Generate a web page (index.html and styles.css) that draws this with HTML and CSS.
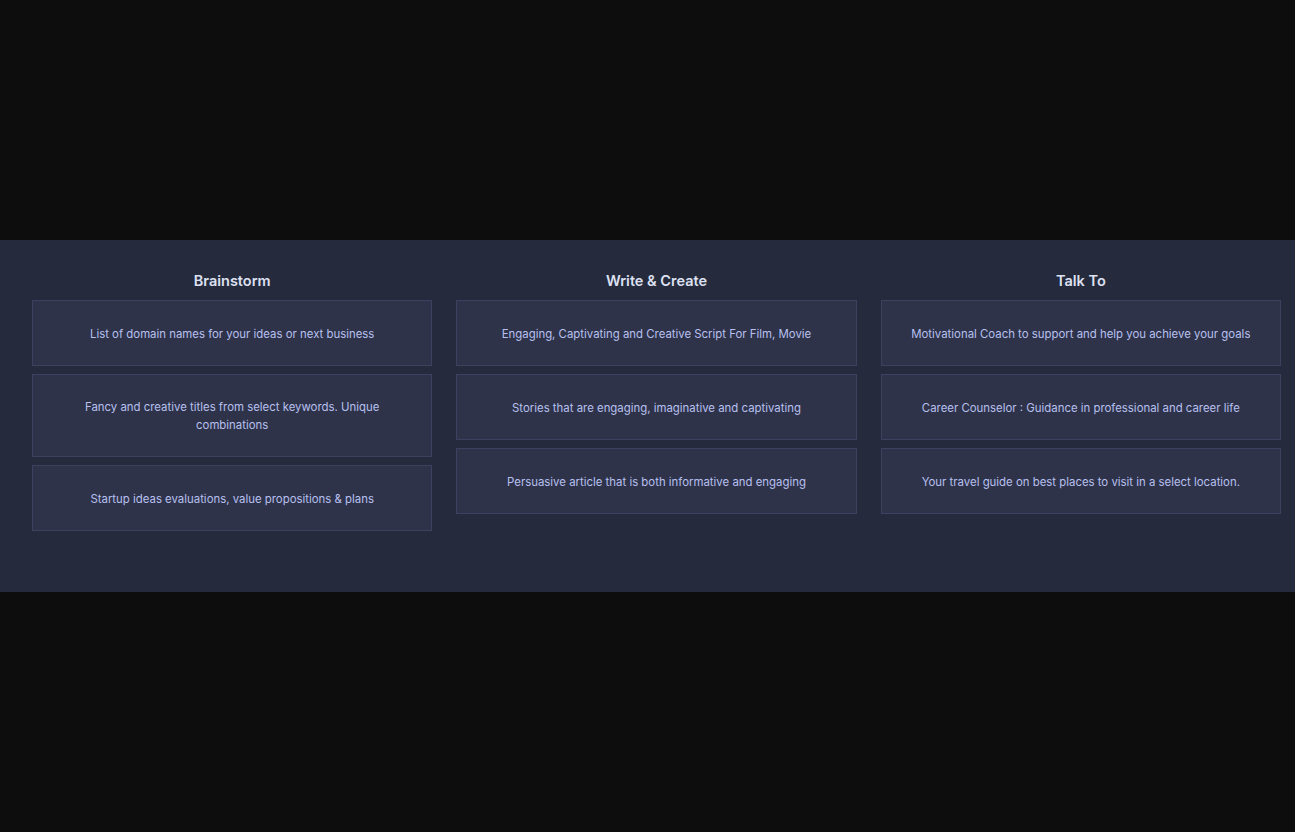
FILE: index.html
```html
<!DOCTYPE html>
<html>
<head>
<meta charset="utf-8">
<link rel="stylesheet" href="styles.css">
</head>
<body>
<div class="page">
  <section class="panel">
    <div class="col">
      <h2 class="title">Brainstorm</h2>
      <div class="card">List of domain names for your ideas or next business</div>
      <div class="card">Fancy and creative titles from select keywords. Unique combinations</div>
      <div class="card">Startup ideas evaluations, value propositions &amp; plans</div>
    </div>
    <div class="col">
      <h2 class="title">Write &amp; Create</h2>
      <div class="card">Engaging, Captivating and Creative Script For Film, Movie</div>
      <div class="card">Stories that are engaging, imaginative and captivating</div>
      <div class="card">Persuasive article that is both informative and engaging</div>
    </div>
    <div class="col">
      <h2 class="title">Talk To</h2>
      <div class="card">Motivational Coach to support and help you achieve your goals</div>
      <div class="card">Career Counselor : Guidance in professional and career life</div>
      <div class="card">Your travel guide on best places to visit in a select location.</div>
    </div>
  </section>
</div>
</body>
</html>
```
FILE: styles.css
```css
html, body {
  margin: 0;
  padding: 0;
  background: #0d0d0e;
  font-family: "Inter", "Liberation Sans", sans-serif;
}
.page {
  height: 832px;
  display: flex;
  align-items: center;
}
.panel {
  width: 100%;
  height: 352px;
  box-sizing: border-box;
  background: #262a3d;
  padding: 30px 14px 0 32px;
  display: grid;
  grid-template-columns: repeat(3, 1fr);
  column-gap: 24px;
  align-items: start;
}
.col {
  display: flex;
  flex-direction: column;
  gap: 8px;
}
.title {
  margin: 0;
  height: 22px;
  line-height: 22px;
  text-align: center;
  font-size: 14.5px;
  font-weight: 600;
  color: #dde1f2;
}
.card {
  box-sizing: border-box;
  min-height: 66px;
  padding: 23px 20px 22px;
  display: flex;
  align-items: center;
  justify-content: center;
  text-align: center;
  background: #2f3349;
  border: 1px solid #3c4160;
  color: #b7c0f0;
  font-size: 11.4px;
  line-height: 18px;
}
```
